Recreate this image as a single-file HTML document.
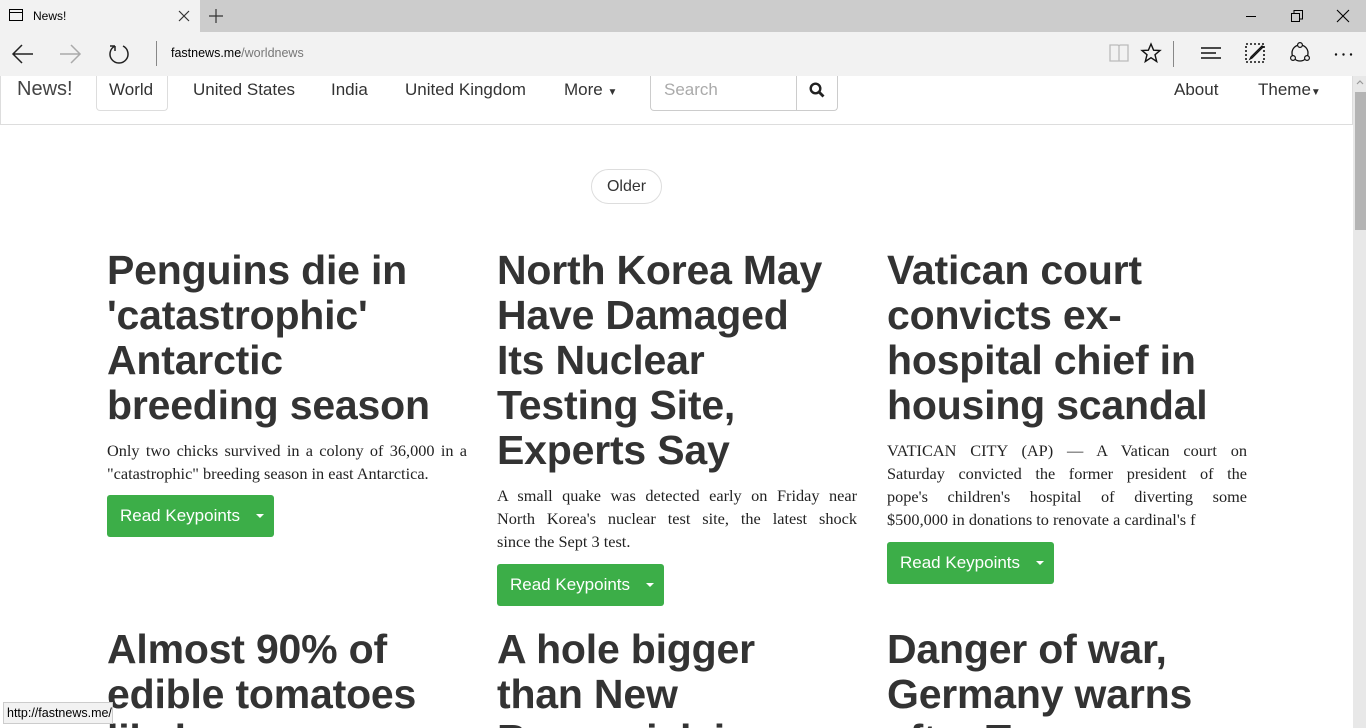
<!DOCTYPE html>
<html><head><meta charset="utf-8">
<style>
*{margin:0;padding:0;box-sizing:border-box}
html{width:1366px;height:728px;overflow:hidden}
body{width:1366px;height:728px;overflow:hidden;background:#fff;font-family:"Liberation Sans",sans-serif;position:relative;color:#333}
.tabbar{position:absolute;left:0;top:0;width:1366px;height:32px;background:#cccccc}
.tab{position:absolute;left:0;top:0;width:200px;height:32px;background:#f2f2f2;font-size:12px;color:#000}
.addr{position:absolute;left:0;top:32px;width:1366px;height:44px;background:#f2f2f2}
.abs{position:absolute}
svg{position:absolute;overflow:visible}
.nav{position:absolute;left:0;top:76px;width:1353px;height:49px;border:1px solid #ddd;border-top:none;background:#fff;font-size:17px;color:#333}
.nav span{position:absolute;top:4px;line-height:20px}
.scroll{position:absolute;left:1353px;top:76px;width:13px;height:652px;background:#e8e8e8}
.thumb{position:absolute;left:1355px;top:92px;width:11px;height:138px;background:#b4b4b4}
h2{position:absolute;font-size:41px;line-height:45px;font-weight:bold;color:#333;white-space:nowrap;letter-spacing:-0.2px}
p.s{position:absolute;font-family:"Liberation Serif",serif;font-size:16.3px;line-height:23px;color:#222;width:360px;white-space:nowrap}
p.j span{display:block;text-align:justify;text-align-last:justify;white-space:normal}
p.j span.l{text-align-last:left}
.btn{position:absolute;width:167px;height:42px;background:#3cae48;border-radius:3px;color:#fff;font-size:17px;line-height:42px;padding-left:13px}
.btn:after{content:"";position:absolute;right:10px;top:19px;border-left:4px solid transparent;border-right:4px solid transparent;border-top:4px solid #fff}
.clip{position:absolute;left:0;top:0;width:1353px;height:728px;overflow:hidden}
</style></head><body>
<div class="tabbar"></div>
<div class="tab">
<svg style="left:9px;top:9px" width="14" height="12"><rect x="0.5" y="0.5" width="13" height="11" fill="none" stroke="#000"/><line x1="0" y1="3.5" x2="14" y2="3.5" stroke="#000"/></svg>
<span class="abs" style="left:33px;top:9px">News!</span>
<svg style="left:179px;top:11px" width="10" height="10"><path d="M0 0L10 10M10 0L0 10" stroke="#333" stroke-width="1.2"/></svg>
</div>
<svg style="left:209px;top:9px" width="14" height="14"><path d="M7 0V14M0 7H14" stroke="#333" stroke-width="1.2"/></svg>
<svg style="left:1246px;top:16px" width="10" height="2"><path d="M0 0.5H10" stroke="#000"/></svg>
<svg style="left:1291px;top:10px" width="12" height="12"><rect x="0.5" y="3.5" width="8" height="8" fill="none" stroke="#000"/><path d="M3 3.5V0.5H11.5V9H8.5" fill="none" stroke="#000"/></svg>
<svg style="left:1337px;top:10px" width="12" height="12"><path d="M0 0L12 12M12 0L0 12" stroke="#000" stroke-width="1.1"/></svg>
<div class="addr">
<svg style="left:12px;top:12px" width="22" height="20"><path d="M21 10H1M10 1L1 10L10 19" fill="none" stroke="#222" stroke-width="1.5"/></svg>
<svg style="left:59px;top:12px" width="22" height="20"><path d="M1 10H21M12 1L21 10L12 19" fill="none" stroke="#aaa" stroke-width="1.5"/></svg>
<svg style="left:108px;top:11px" width="22" height="22"><path d="M7 3A9 9 0 1 0 15 3M7 3V8M7 3H2" fill="none" stroke="#222" stroke-width="1.5"/></svg>
<div class="abs" style="left:156px;top:9px;width:1px;height:25px;background:#888"></div>
<span class="abs" style="left:171px;top:14px;font-size:12.5px;color:#000">fastnews.me<span style="color:#777">/worldnews</span></span>
<svg style="left:1109px;top:12px" width="20" height="18"><path d="M1 1H9L10 2L11 1H19V17H1Z M10 2V17" fill="none" stroke="#bbb" stroke-width="1.3"/></svg>
<svg style="left:1141px;top:11px" width="20" height="20"><path d="M10 1L12.6 7.2L19 7.5L14 11.7L15.7 18.5L10 14.7L4.3 18.5L6 11.7L1 7.5L7.4 7.2Z" fill="none" stroke="#111" stroke-width="1.4"/></svg>
<div class="abs" style="left:1173px;top:9px;width:1px;height:26px;background:#888"></div>
<svg style="left:1201px;top:15px" width="20" height="14"><path d="M0 1H20M0 6H15M0 11H20" stroke="#111" stroke-width="1.4"/></svg>
<svg style="left:1245px;top:11px" width="20" height="20"><rect x="1" y="1" width="18" height="18" fill="none" stroke="#111" stroke-width="1.6" stroke-dasharray="2 2"/><path d="M6 14L17 3L18 4L7 15L5 16Z" fill="none" stroke="#111" stroke-width="1.3"/></svg>
<svg style="left:1289px;top:10px" width="22" height="22"><circle cx="11" cy="11" r="8" fill="none" stroke="#111" stroke-width="1.3"/><circle cx="11" cy="3" r="2.4" fill="#f2f2f2" stroke="#111" stroke-width="1.2"/><circle cx="4" cy="16" r="2.4" fill="#f2f2f2" stroke="#111" stroke-width="1.2"/><circle cx="18" cy="16" r="2.4" fill="#f2f2f2" stroke="#111" stroke-width="1.2"/></svg>
<svg style="left:1334px;top:21px" width="20" height="4"><circle cx="2" cy="1.5" r="1.2" fill="#111"/><circle cx="9.5" cy="1.5" r="1.2" fill="#111"/><circle cx="17" cy="1.5" r="1.2" fill="#111"/></svg>
</div>
<div class="nav">
<span style="left:16px;font-size:20px;top:3px;color:#444">News!</span>
<div class="abs" style="left:95px;top:0;width:72px;height:35px;border:1px solid #ddd;border-top:none;border-radius:0 0 4px 4px"></div>
<span style="left:108px">World</span>
<span style="left:192px">United States</span>
<span style="left:330px">India</span>
<span style="left:404px">United Kingdom</span>
<span style="left:563px">More <small style="font-size:10px">&#9660;</small></span>
<div class="abs" style="left:649px;top:0;width:188px;height:35px;border:1px solid #ccc;border-top:none;border-radius:0 0 4px 4px"></div>
<div class="abs" style="left:795px;top:0;width:1px;height:35px;background:#ccc"></div>
<span style="left:663px;color:#aaa">Search</span>
<svg style="left:808px;top:6px" width="16" height="16"><circle cx="6.5" cy="6.5" r="4.8" fill="none" stroke="#222" stroke-width="2.4"/><path d="M10 10L14.5 14.5" stroke="#222" stroke-width="2.8"/></svg>
<span style="left:1173px">About</span>
<span style="left:1257px">Theme<small style="font-size:10px">&#9660;</small></span>
</div>
<div class="scroll"></div><div class="thumb"></div>
<svg style="left:1356px;top:79px" width="8" height="6"><path d="M1 5L4 2L7 5" fill="none" stroke="#999" stroke-width="1.2"/></svg>
<div class="abs" style="left:591px;top:169px;width:71px;height:35px;border:1px solid #ddd;border-radius:18px;font-size:16px;line-height:33px;text-align:center;color:#333">Older</div>

<div class="clip">
<h2 style="left:107px;top:248px">Penguins die in<br>'catastrophic'<br>Antarctic<br>breeding season</h2>
<p class="s j" style="left:107px;top:439px"><span>Only two chicks survived in a colony of 36,000 in a</span><span class="l">"catastrophic" breeding season in east Antarctica.</span></p>
<div class="btn" style="left:107px;top:495px">Read Keypoints</div>

<h2 style="left:497px;top:248px">North Korea May<br>Have Damaged<br>Its Nuclear<br>Testing Site,<br>Experts Say</h2>
<p class="s j" style="left:497px;top:484px"><span>A small quake was detected early on Friday near</span><span>North Korea's nuclear test site, the latest shock</span><span class="l">since the Sept 3 test.</span></p>
<div class="btn" style="left:497px;top:564px">Read Keypoints</div>

<h2 style="left:887px;top:248px">Vatican court<br>convicts ex-<br>hospital chief in<br>housing scandal</h2>
<p class="s j" style="left:887px;top:439px"><span>VATICAN CITY (AP) — A Vatican court on</span><span>Saturday convicted the former president of the</span><span>pope's children's hospital of diverting some</span><span class="l">$500,000 in donations to renovate a cardinal's f</span></p>
<div class="btn" style="left:887px;top:542px">Read Keypoints</div>

<h2 style="left:107px;top:627px">Almost 90% of<br>edible tomatoes<br>likely</h2>
<h2 style="left:497px;top:627px">A hole bigger<br>than New<br>Brunswick is</h2>
<h2 style="left:887px;top:627px">Danger of war,<br>Germany warns<br>after Trump</h2>
</div>

<div class="abs" style="left:3px;top:702px;width:110px;height:22px;background:#f2f2f2;border:1px solid #ccc;font-size:12.5px;line-height:20px;padding-left:3px;color:#000">http://fastnews.me/</div>
</body></html>
